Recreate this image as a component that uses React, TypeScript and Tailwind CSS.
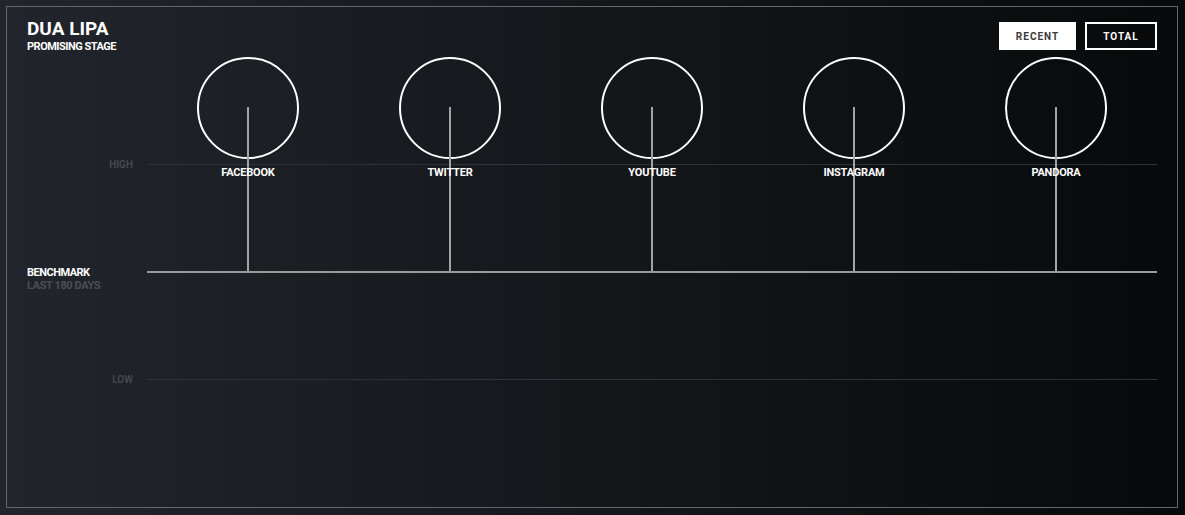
import React from "react";

const PLATFORMS = ["FACEBOOK", "TWITTER", "YOUTUBE", "INSTAGRAM", "PANDORA"];

const PlatformColumn = ({ name }: { name: string }) => (
  <div className="flex flex-1 flex-col items-center">
    <div className="relative h-[102px] w-[102px] rounded-full border-2 border-white">
      <div className="absolute left-1/2 top-[48px] h-[164px] w-[2px] -translate-x-1/2 bg-[#a3a3a3]" />
    </div>
    <div className="relative mt-[8px] text-[11px] font-bold leading-[12px] tracking-[-0.2px] text-white">{name}</div>
  </div>
);

const App = () => {
  return (
    <div
      className="h-[515px] w-[1185px] bg-gradient-to-r from-[#22252c] to-[#08090a] pl-[6px] pt-[6px]"
      style={{ fontFamily: "Roboto, 'Liberation Sans', sans-serif" }}
    >
      <div className="flex h-[502px] w-[1172px] flex-col border border-[#63666a] px-5 pt-[12px]">
        <div className="flex h-[38px] items-start justify-between">
          <div className="flex flex-col">
            <div className="text-[19px] font-bold leading-[20px] text-white">DUA LIPA</div>
            <div className="mt-[2px] text-[11px] font-bold leading-[12px] tracking-[-0.5px] text-white">PROMISING STAGE</div>
          </div>
          <div className="mt-[3px] flex gap-[9px]">
            <button className="flex h-[28px] w-[77px] items-center justify-center bg-white text-[10px] font-bold tracking-[1px] text-[#3a3a3a]">
              RECENT
            </button>
            <button className="flex h-[28px] w-[72px] items-center justify-center border-2 border-white text-[10px] font-bold tracking-[1px] text-white">
              TOTAL
            </button>
          </div>
        </div>

        <div className="flex">
          <div className="flex w-[120px] flex-col">
            <div className="h-[102px]" />
            <div className="pr-[14px] text-right text-[10px] font-bold leading-[12px] text-[#45484e]">HIGH</div>
            <div className="h-[96px]" />
            <div className="text-[11px] font-bold leading-[12px] tracking-[-0.5px] text-white">BENCHMARK</div>
            <div className="mt-[1px] text-[11px] font-bold leading-[12px] tracking-[-0.4px] text-[#4b4e54]">LAST 180 DAYS</div>
            <div className="h-[82px]" />
            <div className="pr-[14px] text-right text-[10px] font-bold leading-[12px] text-[#45484e]">LOW</div>
          </div>

          <div className="relative flex w-[1010px] flex-col">
            <div className="h-[107px]" />
            <div className="h-px bg-[#2e3136]" />
            <div className="h-[106px]" />
            <div className="h-[2px] bg-[#9a9a9a]" />
            <div className="h-[106px]" />
            <div className="h-px bg-[#2e3136]" />
            <div className="absolute inset-x-0 top-0 flex">
              {PLATFORMS.map((p) => (
                <PlatformColumn key={p} name={p} />
              ))}
            </div>
          </div>
        </div>
      </div>
    </div>
  );
};

export default App;
